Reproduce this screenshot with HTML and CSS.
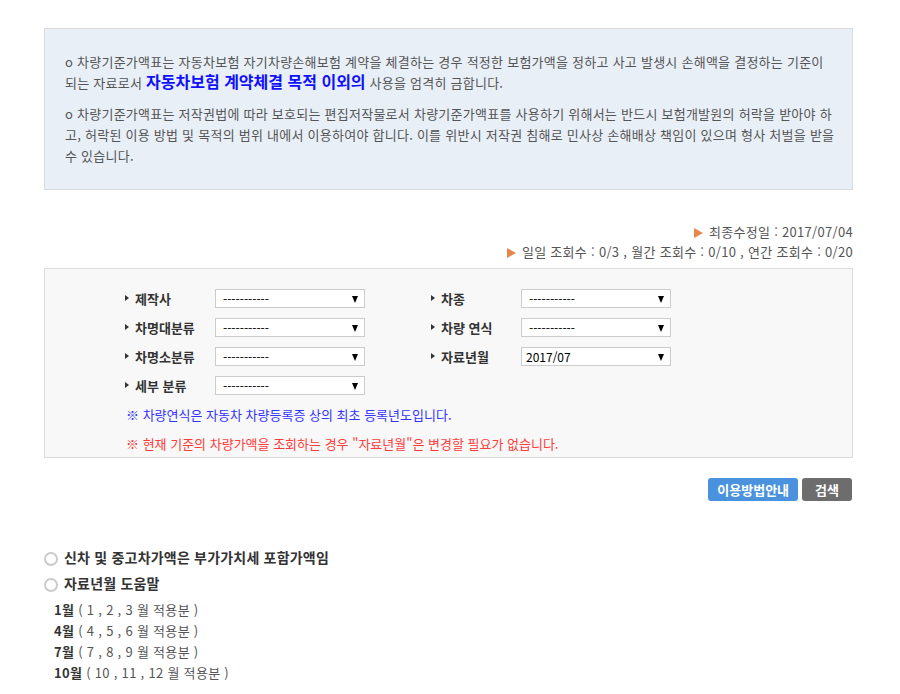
FILE: index.html
```html
<!DOCTYPE html>
<html lang="ko">
<head>
  <meta charset="UTF-8">
  <title>차량기준가액 조회</title>
  <link rel="stylesheet" href="styles.css">
</head>
<body>
  <div class="wrap">
    <div class="notice">
      <p>o 차량기준가액표는 자동차보험 자기차량손해보험 계약을 체결하는 경우 적정한 보험가액을 정하고 사고 발생시 손해액을 결정하는 기준이 되는 자료로서 <strong class="hl">자동차보험 계약체결 목적 이외의</strong> 사용을 엄격히 금합니다.</p>
      <p>o 차량기준가액표는 저작권법에 따라 보호되는 편집저작물로서 차량기준가액표를 사용하기 위해서는 반드시 보험개발원의 허락을 받아야 하고, 허락된 이용 방법 및 목적의 범위 내에서 이용하여야 합니다. 이를 위반시 저작권 침해로 민사상 손해배상 책임이 있으며 형사 처벌을 받을 수 있습니다.</p>
    </div>

    <div class="info">
      <div><span class="tri"></span>최종수정일 : 2017/07/04</div>
      <div><span class="tri"></span>일일 조회수 : 0/3 , 월간 조회수 : 0/10 , 연간 조회수 : 0/20</div>
    </div>

    <div class="search">
      <div class="grid">
        <div class="label">제작사</div>
        <div class="select">-----------</div>
        <div></div>
        <div class="label">차종</div>
        <div class="select">-----------</div>

        <div class="label">차명대분류</div>
        <div class="select">-----------</div>
        <div></div>
        <div class="label">차량 연식</div>
        <div class="select">-----------</div>

        <div class="label">차명소분류</div>
        <div class="select">-----------</div>
        <div></div>
        <div class="label">자료년월</div>
        <div class="select year">2017/07</div>

        <div class="label">세부 분류</div>
        <div class="select">-----------</div>
      </div>
      <p class="note blue">※ 차량연식은 자동차 차량등록증 상의 최초 등록년도입니다.</p>
      <p class="note red">※ 현재 기준의 차량가액을 조회하는 경우 "자료년월"은 변경할 필요가 없습니다.</p>
    </div>

    <div class="buttons">
      <button class="btn btn-blue">이용방법안내</button>
      <button class="btn btn-grey">검색</button>
    </div>

    <ul class="bullets">
      <li>신차 및 중고차가액은 부가가치세 포함가액임</li>
      <li>자료년월 도움말</li>
    </ul>
    <ul class="months">
      <li><b>1월</b> ( 1 , 2 , 3 월 적용분 )</li>
      <li><b>4월</b> ( 4 , 5 , 6 월 적용분 )</li>
      <li><b>7월</b> ( 7 , 8 , 9 월 적용분 )</li>
      <li><b>10월</b> ( 10 , 11 , 12 월 적용분 )</li>
    </ul>
  </div>
</body>
</html>
```

FILE: styles.css
```css
* { box-sizing: border-box; margin: 0; padding: 0; }
body {
  font-family: "Noto Sans CJK KR", "Noto Sans", sans-serif;
  font-size: 13px;
  color: #555;
  background: #fff;
}
.wrap {
  width: 809px;
  margin-left: 44px;
  padding-top: 28px;
}
.notice {
  background: #e8eff7;
  border: 1px solid #dcdcdc;
  height: 162px;
  padding: 22px 14px 0 20px;
  letter-spacing: 0.25px;
}
.notice p {
  line-height: 21px;
  margin-bottom: 10px;
}
.notice .hl {
  color: #1010ff;
  font-size: 16px;
  line-height: 16px;
  letter-spacing: 0;
}
.info {
  margin-top: 32px;
  text-align: right;
  line-height: 20px;
  font-size: 13px;
  color: #555;
  letter-spacing: 0.3px;
}
.tri {
  display: inline-block;
  width: 0;
  height: 0;
  border-top: 5px solid transparent;
  border-bottom: 5px solid transparent;
  border-left: 9px solid #e8864a;
  margin-right: 6px;
  vertical-align: -1px;
}
.search {
  margin-top: 6px;
  background: #f8f8f8;
  border: 1px solid #dcdcdc;
  padding: 15px 0 0 80px;
  height: 190px;
}
.grid {
  display: grid;
  grid-template-columns: 90px 150px 66px 90px 150px;
  grid-auto-rows: 29px;
  align-items: center;
}
.label {
  font-size: 13px;
  font-weight: bold;
  color: #333;
  padding-left: 10px;
  position: relative;
}
.label::before {
  content: "";
  position: absolute;
  left: 0;
  top: 6px;
  border-top: 3px solid transparent;
  border-bottom: 3px solid transparent;
  border-left: 4px solid #333;
}
.select {
  height: 19px;
  background: #fff;
  border: 1px solid #ccc;
  font-size: 12px;
  line-height: 17px;
  padding-left: 7px;
  color: #000;
  position: relative;
}
.select::after {
  content: "";
  position: absolute;
  right: 6px;
  top: 6px;
  border-left: 3.5px solid transparent;
  border-right: 3.5px solid transparent;
  border-top: 7px solid #000;
}
.select.year { padding-left: 4px; }
.note {
  line-height: 29px;
  font-size: 13px;
  padding-left: 1px;
}
.note.blue { color: #3333ff; }
.note.red { color: #ff3b3b; }
.buttons {
  display: flex;
  justify-content: flex-end;
  gap: 4px;
  margin-top: 20px;
  padding-right: 1px;
}
.btn {
  height: 23px;
  border: none;
  border-radius: 3px;
  color: #fff;
  font-family: inherit;
  font-size: 13px;
  font-weight: bold;
  padding: 0 9px;
}
.btn-blue { background: #4a92dd; }
.btn-grey { background: #6d6d6d; padding: 0 13px; }
.bullets {
  list-style: none;
  margin-top: 43px;
}
.bullets li {
  position: relative;
  padding-left: 20px;
  line-height: 26px;
  font-size: 14px;
  font-weight: bold;
  color: #333;
  letter-spacing: 0.2px;
}
.bullets li::before {
  content: "";
  position: absolute;
  left: 0;
  top: 8px;
  width: 10px;
  height: 10px;
  border: 2.5px solid #cbcbcb;
  border-radius: 50%;
}
.months {
  list-style: none;
  margin-top: 3px;
  padding-left: 10px;
}
.months li {
  line-height: 21px;
  font-size: 13px;
  color: #555;
  letter-spacing: 0.3px;
}
.months b { color: #333; }
```
